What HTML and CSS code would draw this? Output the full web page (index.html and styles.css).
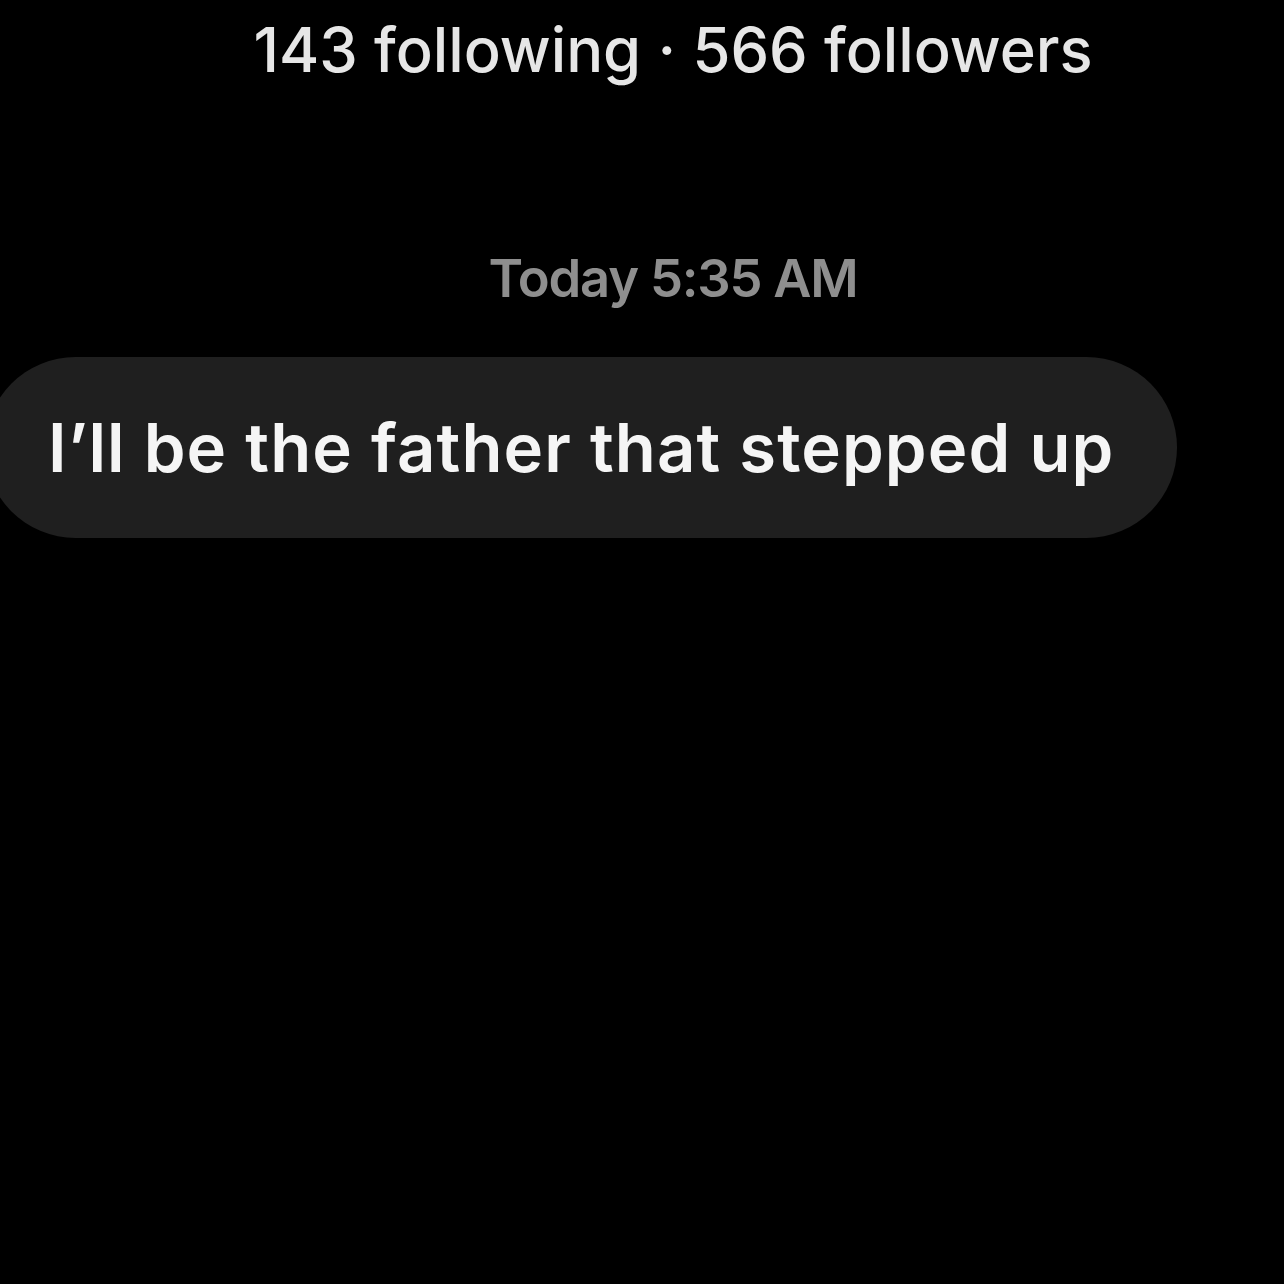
FILE: index.html
```html
<!DOCTYPE html>
<html>
<head>
<meta charset="utf-8">
<link rel="stylesheet" href="styles.css">
</head>
<body>
<main class="thread">
  <header class="profile-stats">143 following · 566 followers</header>
  <div class="timestamp">Today 5:35 AM</div>
  <div class="message-row">
    <div class="bubble">I’ll be the father that stepped up</div>
  </div>
</main>
</body>
</html>
```
FILE: styles.css
```css
html, body {
  margin: 0;
  padding: 0;
  background: #000;
}
body {
  width: 1284px;
  height: 1284px;
  overflow: hidden;
  font-family: Inter, "Noto Sans", sans-serif;
}
.thread {
  display: flex;
  flex-direction: column;
}
.profile-stats {
  padding-left: 62px;
  text-align: center;
  color: #e6e6e6;
  font-size: 61.4px;
  font-weight: 500;
  line-height: 100px;
}
.timestamp {
  padding-left: 62px;
  text-align: center;
  color: #8e8e8e;
  font-size: 52.5px;
  letter-spacing: -1.2px;
  font-weight: 600;
  line-height: 80px;
  margin-top: 138px;
}
.message-row {
  display: flex;
  margin-top: 39px;
}
.bubble {
  margin-left: -15px;
  height: 181px;
  box-sizing: border-box;
  display: flex;
  align-items: center;
  padding: 0 63px;
  background: #1f1f1f;
  border-radius: 91px;
  color: #f5f5f5;
  font-size: 67px;
  letter-spacing: 1.1px;
  font-weight: 600;
}
```
